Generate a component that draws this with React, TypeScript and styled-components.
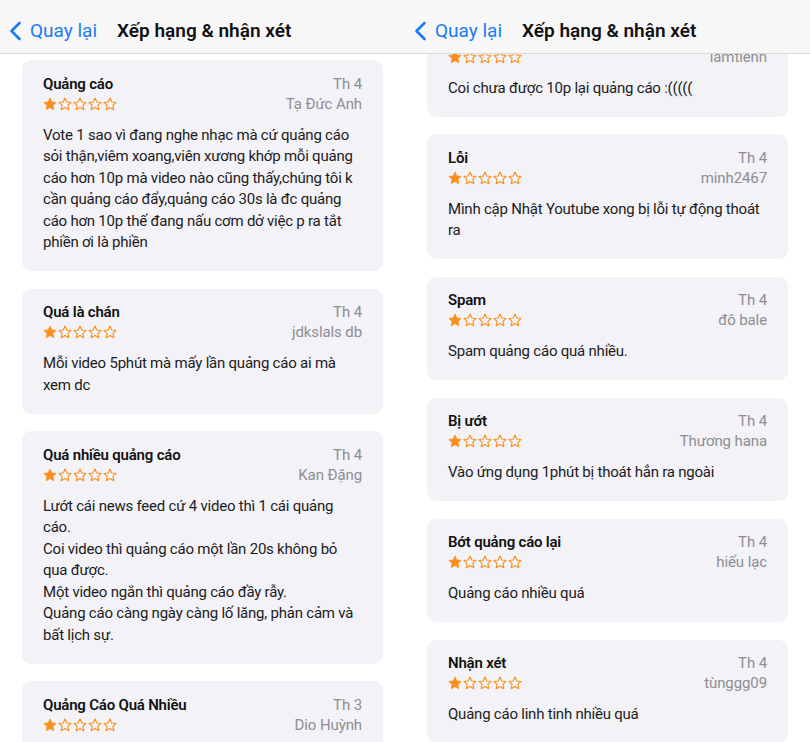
import React from 'react'
import styled, { createGlobalStyle } from 'styled-components'

const GlobalStyle = createGlobalStyle`
  html, body {
    margin: 0;
    padding: 0;
    background: #fff;
  }
  body {
    font-family: Roboto, Inter, 'Noto Sans', 'Liberation Sans', sans-serif;
    -webkit-font-smoothing: antialiased;
  }
`

type Review = {
  title: string
  date: string
  author: string
  body: string
}

// line breaks follow the screenshot
const leftReviews: Review[] = [
  {
    title: 'Quảng cáo',
    date: 'Th 4',
    author: 'Tạ Đức Anh',
    body: 'Vote 1 sao vì đang nghe nhạc mà cứ quảng cáo\nsỏi thận,viêm xoang,viên xương khớp mỗi quảng\ncáo hơn 10p mà video nào cũng thấy,chúng tôi k\ncần quảng cáo đẩy,quảng cáo 30s là đc quảng\ncáo hơn 10p thế đang nấu cơm dở việc p ra tắt\nphiền ơi là phiền',
  },
  {
    title: 'Quá là chán',
    date: 'Th 4',
    author: 'jdkslals db',
    body: 'Mỗi video 5phút mà mấy lần quảng cáo ai mà\nxem dc',
  },
  {
    title: 'Quá nhiều quảng cáo',
    date: 'Th 4',
    author: 'Kan Đặng',
    body: 'Lướt cái news feed cứ 4 video thì 1 cái quảng\ncáo.\nCoi video thì quảng cáo một lần 20s không bỏ\nqua được.\nMột video ngắn thì quảng cáo đầy rẫy.\nQuảng cáo càng ngày càng lố lăng, phản cảm và\nbất lịch sự.',
  },
  // its text is below the fold
  {
    title: 'Quảng Cáo Quá Nhiều',
    date: 'Th 3',
    author: 'Dio Huỳnh',
    body: '',
  },
]

// first card is scrolled up under the nav bar, only its tail shows
const rightReviews: Review[] = [
  {
    title: '',
    date: '',
    author: 'lamtienn',
    body: 'Coi chưa được 10p lại quảng cáo :(((((',
  },
  {
    title: 'Lỗi',
    date: 'Th 4',
    author: 'minh2467',
    body: 'Mình cập Nhật Youtube xong bị lỗi tự động thoát\nra',
  },
  {
    title: 'Spam',
    date: 'Th 4',
    author: 'đô bale',
    body: 'Spam quảng cáo quá nhiều.',
  },
  {
    title: 'Bị ướt',
    date: 'Th 4',
    author: 'Thương hana',
    body: 'Vào ứng dụng 1phút bị thoát hẳn ra ngoài',
  },
  {
    title: 'Bớt quảng cáo lại',
    date: 'Th 4',
    author: 'hiếu lạc',
    body: 'Quảng cáo nhiều quá',
  },
  {
    title: 'Nhận xét',
    date: 'Th 4',
    author: 'tùnggg09',
    body: 'Quảng cáo linh tinh nhiều quá',
  },
]

const Screens = styled.div`
  display: flex;
  width: 810px;
  height: 742px;
`

const Panel = styled.div`
  position: relative;
  width: 405px;
  height: 742px;
  overflow: hidden;
  display: flex;
  flex-direction: column;
  background: #fff;
`

const NavBar = styled.div`
  position: relative;
  z-index: 2;
  flex: 0 0 auto;
  height: 45px;
  display: flex;
  align-items: center;
  padding: 8px 0 0 9px;
  background: #f7f7f8;
  border-bottom: 1px solid #d9d9dc;
`

const BackButton = styled.div`
  display: flex;
  align-items: center;
  gap: 8px;
  color: #1a7cf5;
  font-size: 19px;
  svg {
    display: block;
  }
`

const NavTitle = styled.div`
  margin-left: 20px;
  color: #111;
  font-size: 19px;
  font-weight: 600;
`

const List = styled.div<{ $offset: number }>`
  display: flex;
  flex-direction: column;
  gap: 17.5px;
  padding: 0 22px;
  margin-top: ${(p) => p.$offset}px;
`

const Card = styled.div`
  background: #f2f2f7;
  border-radius: 9px;
  padding: 13.5px 21px 17.5px;
`

const Meta = styled.div`
  display: grid;
  grid-template-columns: 1fr auto;
  grid-auto-rows: 20px;
  align-items: center;
`

const Title = styled.div`
  color: #111;
  font-size: 15px;
  font-weight: 600;
  letter-spacing: -0.2px;
`

const Faint = styled.div`
  color: #8e8e93;
  font-size: 15px;
  text-align: right;
  letter-spacing: -0.1px;
`

const Stars = styled.div`
  display: flex;
  gap: 1px;
  svg {
    display: block;
  }
`

const Body = styled.p`
  margin: 11px 0 0;
  min-height: 21.5px;
  color: #1c1c1e;
  font-size: 15px;
  line-height: 21.5px;
  letter-spacing: -0.22px;
  white-space: pre-line;
`

const Chevron = () => (
  <svg width="13" height="20" viewBox="0 0 13 20">
    <path
      d="M10.5 2 L2.5 10 L10.5 18"
      fill="none"
      stroke="currentColor"
      strokeWidth="2.6"
      strokeLinecap="round"
      strokeLinejoin="round"
    />
  </svg>
)

const STAR =
  'M7 1 L8.8 5 L13.1 5.45 L9.9 8.4 L10.8 12.7 L7 10.5 L3.2 12.7 L4.1 8.4 L0.9 5.45 L5.2 5 Z'

const Star = ({ filled }: { filled: boolean }) => (
  <svg width="14" height="14" viewBox="0 0 14 14">
    <path
      d={STAR}
      fill={filled ? '#fa8f1c' : 'none'}
      stroke="#fa8f1c"
      strokeWidth={filled ? 0.8 : 1.1}
      strokeLinejoin="round"
    />
  </svg>
)

const Rating = ({ value }: { value: number }) => (
  <Stars>
    {[0, 1, 2, 3, 4].map((i) => (
      <Star key={i} filled={i < value} />
    ))}
  </Stars>
)

const ReviewCard = ({ review }: { review: Review }) => (
  <Card>
    <Meta>
      <Title>{review.title}</Title>
      <Faint>{review.date}</Faint>
      <Rating value={1} />
      <Faint>{review.author}</Faint>
    </Meta>
    <Body>{review.body}</Body>
  </Card>
)

const Screen = ({ reviews, offset }: { reviews: Review[]; offset: number }) => (
  <Panel>
    <NavBar>
      <BackButton>
        <Chevron />
        Quay lại
      </BackButton>
      <NavTitle>Xếp hạng &amp; nhận xét</NavTitle>
    </NavBar>
    <List $offset={offset}>
      {reviews.map((r, i) => (
        <ReviewCard key={i} review={r} />
      ))}
    </List>
  </Panel>
)

export default function App() {
  return (
    <>
      <GlobalStyle />
      <Screens>
        <Screen reviews={leftReviews} offset={6} />
        <Screen reviews={rightReviews} offset={-41} />
      </Screens>
    </>
  )
}
